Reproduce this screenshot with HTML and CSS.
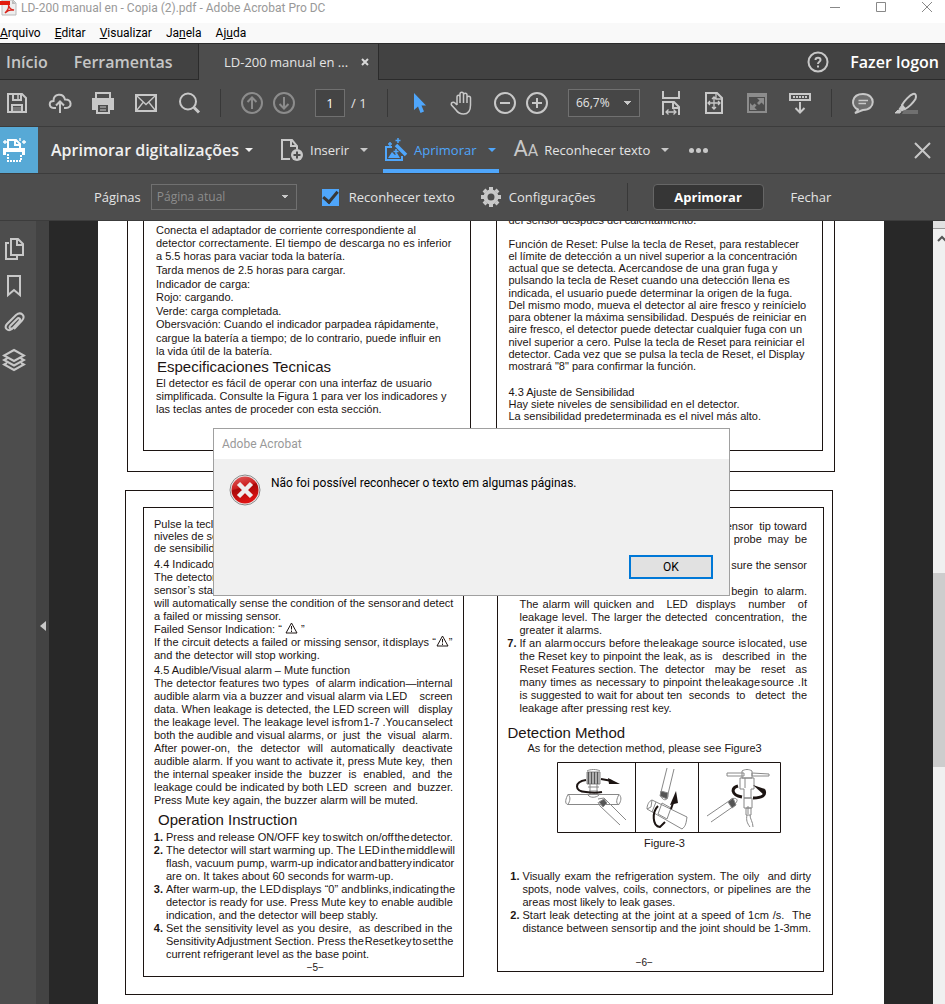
FILE: index.html
```html
<!DOCTYPE html>
<html lang="pt-BR">
<head>
<meta charset="utf-8">
<title>LD-200 manual en - Copia (2).pdf - Adobe Acrobat Pro DC</title>
<link rel="stylesheet" href="styles.css">
</head>
<body>
<header class="titlebar">
  <svg class="app-icon" width="17" height="16" viewBox="0 0 17 16"><path d="M2 0H13L16 3V15H2Z" fill="#eee" stroke="#bbb"/><path d="M12 0V4H16Z" fill="#bbb"/><path d="M0 1H10V5H0Z" fill="#e21b0c"/><path d="M5 13C8 10 9 7 8.500 5C9.500 9 12 10 14 10C10 9 7 11 5 13Z" fill="none" stroke="#d9251c" stroke-width="1.300"/></svg>
  <h1 class="window-title">LD-200 manual en - Copia (2).pdf - Adobe Acrobat Pro DC</h1>
  <div class="window-buttons">
    <button aria-label="Minimizar"><svg width="12" height="12"><path d="M1 7.500H11" stroke="#888"/></svg></button>
    <button aria-label="Maximizar"><svg width="12" height="12"><path d="M1.500 2.500H10.500V11.500H1.500Z" fill="none" stroke="#888"/></svg></button>
    <button aria-label="Fechar janela"><svg width="12" height="12"><path d="M1 2L11 12M11 2L1 12" stroke="#888"/></svg></button>
  </div>
</header>
<nav class="menubar">
  <a href="#"><u>A</u>rquivo</a><a href="#"><u>E</u>ditar</a><a href="#"><u>V</u>isualizar</a><a href="#">Ja<u>n</u>ela</a><a href="#">Aj<u>u</u>da</a>
</nav>
<div class="tabs">
  <div class="tabs-home"><a href="#">Início</a><a href="#">Ferramentas</a></div>
  <div class="tab-active"><span>LD-200 manual en ...</span><button aria-label="Fechar guia"><svg width="8" height="8"><path d="M1 1L7 7M7 1L1 7" stroke="#d8d8d8" stroke-width="2"/></svg></button></div>
  <div class="tabs-rest">
    <button aria-label="Ajuda"><svg width="22" height="22" viewBox="0 0 22 22" fill="none" stroke="#c8c8c8" stroke-width="2"><circle cx="11" cy="11" r="9.500"/><path d="M8.500 9C8.500 6 13.500 6 13.500 9C13.500 11 11 10.500 11 13M11 14.500V16.500"/></svg></button>
    <a href="#" class="login">Fazer logon</a>
  </div>
</div>
<div class="toolbar">
  <button aria-label="Salvar"><svg viewBox="0 0 24 24"><path d="M3 3H17L21 7V21H3Z"/><path d="M8 3V9H16V3M7 21V14H17V21" /><path d="M13 4V8" stroke-width="1.500"/><path d="M8 16H16V20H8Z" fill="#777" stroke="none"/></svg></button>
  <button aria-label="Nuvem"><svg viewBox="0 0 24 24"><path d="M8 17H5.500C0.500 16.500 0.500 10 5.500 10C5.500 2.500 15 1.500 17 8.500C24 8 24.500 17 18 17H16M12 22V11M8 14.500L12 10.500L16 14.500"/></svg></button>
  <button aria-label="Imprimir"><svg viewBox="0 0 24 24"><path d="M5 7V2H19V7" /><path d="M1 7H23V19H19V14H5V19H1Z" fill="#c8c8c8" stroke="none"/><path d="M6 13H18V22H6Z"/><path d="M9 16H15M9 19H15" stroke-width="1"/></svg></button>
  <button aria-label="E-mail"><svg viewBox="0 0 24 24"><path d="M2 4H22V20H2Z" /><path d="M3 5L12 13.500L21 5M3 19L9 11.500M21 19L15 11.500" stroke-width="1.300"/></svg></button>
  <button aria-label="Localizar"><svg viewBox="0 0 24 24"><circle cx="11" cy="10.500" r="8"/><path d="M17 16.500L22 21.500" stroke-width="3"/></svg></button>
  <span class="sep"></span>
  <div class="pair dim">
    <button aria-label="Página anterior"><svg viewBox="0 0 24 24"><circle cx="12" cy="12" r="10"/><path d="M12 18V7M7.500 11L12 6.500L16.500 11"/></svg></button>
    <button aria-label="Próxima página"><svg viewBox="0 0 24 24"><circle cx="12" cy="12" r="10"/><path d="M12 6V17M7.500 13L12 17.500L16.500 13"/></svg></button>
  </div>
  <div class="pager"><input type="text" value="1" aria-label="Número da página"><span>/ 1</span></div>
  <span class="sep"></span>
  <button aria-label="Selecionar"><svg viewBox="0 0 24 24"><path d="M7 2V19L11 15.500L13.500 22L17 20.500L14.500 14.500H19Z" fill="#4fa6fb" stroke="none"/></svg></button>
  <button aria-label="Mão"><svg viewBox="0 0 24 24" class="thin"><path d="M7 14V6C7 3.500 10 3.500 10 6V3C10 0.500 13.500 0.500 13.500 3V4C13.500 1.500 17 1.500 17 4V7C17 4.500 20.500 4.500 20.500 7V14C20.500 20 18 23 13.500 23C10 23 8 22 6 19L1.500 14C0.500 11.500 3.500 10.500 5 12L7 14M10 5V12M13.500 3V12M17 5V12"/></svg></button>
  <div class="pair">
    <button aria-label="Diminuir zoom"><svg viewBox="0 0 24 24"><circle cx="12" cy="12" r="10"/><path d="M7 12H17"/></svg></button>
    <button aria-label="Aumentar zoom"><svg viewBox="0 0 24 24"><circle cx="12" cy="12" r="10"/><path d="M7 12H17M12 7V17"/></svg></button>
  </div>
  <select class="zoom" aria-label="Zoom"><option>66,7%</option></select>
  <button aria-label="Ajustar largura"><svg viewBox="0 0 24 24"><path d="M4 0V7H20V0M4 24V11H15L20 16V24M14 11V17H20"/><path d="M7 21H17M9.500 18.500L7 21L9.500 23.500M14.500 18.500L17 21L14.500 23.500" stroke-width="1.300"/></svg></button>
  <button aria-label="Ajustar página"><svg viewBox="0 0 24 24"><path d="M4 2H15L20 7V22H4Z"/><path d="M14 2V8H20M12 6V18M6 12H18M10 8L12 6L14 8M10 16L12 18L14 16M8 10L6 12L8 14M16 10L18 12L16 14" stroke-width="1.300"/></svg></button>
  <button aria-label="Tela cheia"><svg viewBox="0 0 24 24"><path d="M3 3H21V21H3Z" stroke="#8c8c8c"/><path d="M3 4.500H21" stroke="#8c8c8c" stroke-width="3"/><path d="M12 7H19V14L16.500 11.500L14 14L12 12L14.500 9.500ZM12 19H5V12L7.500 14.500L9.500 12.500L11.500 14.500L9.500 16.500Z" fill="#8c8c8c" stroke="none"/></svg></button>
  <button aria-label="Ocultar barra"><svg viewBox="0 0 24 24"><path d="M2 3H22V9H2ZM12 11V21M7.500 17L12 21.500L16.500 17"/><path d="M5 6H19" stroke-dasharray="2 1"/></svg></button>
  <span class="sep"></span>
  <button aria-label="Comentar"><svg viewBox="0 0 24 24"><path d="M7 18.500C-1 15 0.500 3 12 3C25 3 25 19 12 19C9 20 6 22 4 22C6 21 6.500 20 7 18.500Z" fill="#6e6e6e"/><path d="M7.500 9.500H17M7.500 12.500H15" stroke-width="1.300"/></svg></button>
  <button aria-label="Realçar"><svg viewBox="0 0 24 24"><path d="M10 19H24V23H8Z" fill="#707070" stroke="none"/><path d="M19 3C16 4 10 10 8 14L11 18C14 17 19 12 21.500 8C22.500 5 22 2 19 3Z" /><path d="M8 14L5 18L8 20L11 18ZM4 19L1 22H6L7 20Z" fill="#c8c8c8" stroke-width="1"/></svg></button>
</div>
<div class="toolrow">
  <div class="tile"><svg width="24" height="26" viewBox="0 0 24 26" fill="none" stroke="#fff" stroke-width="2"><path d="M6 11V3H14L18 7V11M13 3V8H18"/><path d="M1 11H23V18H20V15H4V18H1Z" fill="#fff" stroke="none"/><path d="M6 17V24H19V17" stroke-dasharray="2 1"/><path d="M3 3V7M1 5H5M18 1V4M22 3V7M20 5H24" stroke-width="1.300"/></svg></div>
  <button class="tool-title">Aprimorar digitalizações<i class="caret"></i></button>
  <button class="tool insert"><svg width="24" height="24" viewBox="0 0 24 24" fill="none" stroke="#c8c8c8" stroke-width="2"><path d="M10 21H2V2H12L17 8V11M11 2V8H17"/><circle cx="17" cy="17" r="6" fill="#c8c8c8" stroke="none"/><path d="M13.500 17H20.500M17 13.500V20.500" stroke="#4d4d4d"/></svg><span>Inserir</span><i class="caret"></i></button>
  <button class="tool enhance"><svg width="24" height="24" viewBox="0 0 24 24" fill="none" stroke="#4fa6fb" stroke-width="2"><path d="M8 9H2V22H18V18"/><path d="M4 20L8 14L11 17L13 15L16 20Z" fill="#4fa6fb" stroke="none"/><path d="M12 7L22 17" stroke-width="3.500"/><path d="M6 4V8M4 6H8M14 0V5M11.500 2.500H16.500M12 11V16M9.500 13.500H14.500" stroke-width="1.500"/></svg><span>Aprimorar</span><i class="caret"></i></button>
  <button class="tool recognize"><span class="aa"><b>A</b>A</span><span>Reconhecer texto</span><i class="caret"></i></button>
  <button class="more" aria-label="Mais"><i></i><i></i><i></i></button>
  <button class="close" aria-label="Fechar ferramenta"><svg width="17" height="17"><path d="M1 1L16 16M16 1L1 16" stroke="#c8c8c8" stroke-width="2"/></svg></button>
</div>
<div class="subrow">
  <label for="pages">Páginas</label>
  <select id="pages" class="pages"><option>Página atual</option></select>
  <label class="check"><input type="checkbox" checked><span>Reconhecer texto</span></label>
  <button class="settings"><svg width="20" height="20" viewBox="-10 -10 20 20"><circle r="5.500" fill="none" stroke="#c8c8c8" stroke-width="4"/><path d="M0 -10V-6M0 10V6M-10 0H-6M10 0H6M-7 -7L-5 -5M7 7L5 5M-7 7L-5 5M7 -7L5 -5" stroke="#c8c8c8" stroke-width="4"/></svg>Configurações</button>
  <span class="sep"></span>
  <button class="primary">Aprimorar</button>
  <button class="plain">Fechar</button>
</div>
<main class="work">
  <nav class="rail">
    <button aria-label="Miniaturas"><svg viewBox="0 0 24 24"><path d="M9 2H16L21 7V18H9ZM15 2V8H21M7 6H4V22H15V19"/></svg></button>
    <button aria-label="Marcadores"><svg viewBox="0 0 24 24"><path d="M6 2H18V21L12 16L6 21Z"/></svg></button>
    <button aria-label="Anexos"><svg viewBox="0 0 24 24"><path d="M8 15L15 8C17 6 19 8 17.500 10L10 18C6 21 1.500 17 5 13L14 4C19 0 24 5 20 9.500L12 18M8 15C6.500 17 9 18.500 10.500 17"/></svg></button>
    <button aria-label="Camadas"><svg viewBox="0 0 24 24"><path d="M12 2L22 7.500L12 13L2 7.500ZM5 10.500L2 12L12 17.500L22 12L19 10.500M5 15L2 16.500L12 22L22 16.500L19 15"/></svg></button>
  </nav>
  <button class="collapse" aria-label="Expandir painel"><i></i></button>
  <div class="canvas">
    <article class="page">
      <section class="spread upper">
        <div class="sheet">
          <p>Conecta el adaptador de corriente correspondiente al<br>detector correctamente. El tiempo de descarga no es inferior<br>a 5.5 horas para vaciar toda la batería.</p>
          <p>Tarda menos de 2.5 horas para cargar.</p>
          <p>Indicador de carga:<br>Rojo: cargando.</p>
          <p>Verde: carga completada.<br>Obersvación: Cuando el indicador parpadea rápidamente,</p>
          <p>cargue la batería a tiempo; de lo contrario, puede influir en<br>la vida útil de la batería.</p>
          <h2>Especificaciones Tecnicas</h2>
          <p>El detector es fácil de operar con una interfaz de usuario<br>simplificada. Consulte la Figura 1 para ver los indicadores y<br>las teclas antes de proceder con esta sección.</p>
        </div>
        <div class="sheet dense">
          <p>del sensor después del calentamiento.</p>
          <p class="block">Función de Reset: Pulse la tecla de Reset, para restablecer<br>el límite de detección a un nivel superior a la concentración<br>actual que se detecta. Acercandose de una gran fuga y<br>pulsando la tecla de Reset cuando una detección llena es</p>
          <p>indicada, el usuario puede determinar la origen de la fuga.<br>Del mismo modo, mueva el detector al aire fresco y reinícielo<br>para obtener la máxima sensibilidad. Después de reiniciar en<br>aire fresco, el detector puede detectar cualquier fuga con un</p>
          <p>nivel superior a cero. Pulse la tecla de Reset para reiniciar el<br>detector. Cada vez que se pulsa la tecla de Reset, el Display<br>mostrará "8" para confirmar la función.</p>
          <p class="block">4.3 Ajuste de Sensibilidad<br>Hay siete niveles de sensibilidad en el detector.<br>La sensibilidad predeterminada es el nivel más alto.</p>
        </div>
      </section>
      <section class="spread lower">
        <div class="sheet five">
          <p class="tight">Pulse la tecla<br>niveles de sens<br>de sensibilidad</p>
          <p>4.4 Indicador<br>The detector<br>sensor’s stat</p>
          <p class="just"><span>will automatically sense the condition of the sensor&#8202;and detect</span></p>
          <p>a failed or missing sensor.</p>
          <p>Failed Sensor Indication: “ <svg class="warn" width="13" height="12" viewBox="0 0 13 12"><path d="M6.500 1L12 11H1ZM6.500 4V7.500M6.500 8.500V10"/></svg> ”</p>
          <p class="just"><span>If the circuit detects a failed or missing sensor, it&#8202;displays “<svg class="warn" width="13" height="12" viewBox="0 0 13 12"><path d="M6.500 1L12 11H1ZM6.500 4V7.500M6.500 8.500V10"/></svg>”</span></p>
          <p>and the detector will stop working.</p>
          <p class="topic">4.5 Audible/Visual alarm – Mute function</p>
          <p class="just"><span>The detector features two types &nbsp;of alarm indication—internal</span><span>audible alarm via a buzzer and visual alarm via LED &nbsp; &nbsp;screen</span><span>data. When leakage is detected, the LED screen will &nbsp;&nbsp;display</span><span>the leakage level. The leakage level is&#8202;from&#8202;1-7 .You&#8202;can&#8202;select</span><span>both the audible and visual alarms, or &nbsp;just &nbsp;the &nbsp;visual &nbsp;alarm.</span><span>After power-on, &nbsp;the &nbsp;detector &nbsp;will &nbsp;automatically &nbsp;deactivate</span><span>audible alarm. If you want to activate it, press Mute key, &nbsp;then</span><span>the internal speaker inside the &nbsp;buzzer &nbsp;is &nbsp;enabled, &nbsp;and &nbsp;the</span><span>leakage could be indicated by both LED &nbsp;screen &nbsp;and &nbsp;buzzer.</span></p>
          <p>Press Mute key again, the buzzer alarm will be muted.</p>
          <h2>Operation Instruction</h2>
          <ol class="just">
            <li><span>Press and release ON/OFF key to&#8202;switch on/off&#8202;the&#8202;detector.</span></li>
            <li><span>The detector will start warming up. The LED&#8202;in&#8202;the&#8202;middle&#8202;will</span><span>flash, vacuum pump, warm-up indicator&#8202;and&#8202;battery&#8202;indicator</span><span class="last">are on. It takes about 60 seconds for warm-up.</span></li>
            <li><span>After warm-up, the LED&#8202;displays “0” and&#8202;blinks,&#8202;indicating&#8202;the</span><span>detector is ready for use. Press Mute key to enable audible</span><span class="last">indication, and the detector will beep stably.</span></li>
            <li><span>Set the sensitivity level as you desire, &nbsp;as described in the</span><span>Sensitivity&#8202;Adjustment Section. Press the&#8202;Reset&#8202;key&#8202;to&#8202;set&#8202;the</span><span class="last">current refrigerant level as the base point.</span></li>
          </ol>
          <div class="folio">−5−</div>
        </div>
        <div class="sheet six">
          <p class="tail">sensor &nbsp;tip toward<br>probe &nbsp;may &nbsp;be<br><br>sure the sensor<br><br>begin &nbsp;to alarm.</p>
          <p class="just carry"><span>The alarm will quicken and &nbsp; LED &nbsp;displays &nbsp; number &nbsp; of</span><span>leakage level. The larger the detected &nbsp;concentration, &nbsp;the</span><span class="last">greater it alarms.</span></p>
          <ol class="just" start="7">
            <li><span>If an alarm&#8202;occurs before the&#8202;leakage source is&#8202;located, use</span><span>the Reset key to pinpoint the leak, as is &nbsp; described &nbsp;in &nbsp;the</span><span>Reset Features section. The &nbsp;detector &nbsp; may be &nbsp; reset &nbsp; as</span><span>many times as necessary to pinpoint the&#8202;leakage&#8202;source .It</span><span>is suggested to wait for about ten &nbsp;seconds &nbsp;to &nbsp; detect &nbsp;the</span><span class="last">leakage after pressing rest key.</span></li>
          </ol>
          <h2>Detection Method</h2>
          <p class="lead">As for the detection method, please see Figure3</p>
          <figure>
            <svg width="224" height="71" viewBox="0 0 224 71" fill="none" stroke="#888" stroke-width="1">
              <path d="M.5 .5H223.500V70.500H.5ZM78.500 0V71M141.500 0V71" stroke="#1c1412"/>
              <path d="M11 32.500H62M11 42.500H62M11 32.500C14 35 13 39 11 42.500C7 42 9 36 11 32.500M62 32.500C65 35 64 39 62 42.500C58 42 60 36 62 32.500"/>
              <path d="M30 10H43V22H30Z" fill="#ccc"/><path d="M30 9C33 7 40 7 43 9M31 25H42M32 29H41M33 22V33M40 22V33M31 33C33 36 39 36 42 33"/><path d="M31.500 10V22M34.500 10V22M37.500 10V22M40.500 10V22" stroke="#555" stroke-width="1.500"/>
              <path d="M29 18C17 20 17 29 29 30C35 31 40 31 45 30M44 17L55 19" stroke="#1c1412" stroke-width="2"/><path d="M51 16L63 22L52 22Z" fill="#1c1412" stroke="none"/>
              <path d="M41 37L47 36L69 58M41 40L43 44L63 63" /><path d="M42 40L47 37L50 41L46 45Z" fill="#555"/>
              <path d="M110 6L104 30M117 7L111 32M104 30C103 40 112 40 111 32" /><path d="M104 29L111 31L110 37L103 34Z" fill="#555"/>
              <path d="M95 38L130 55M90 47L125 67M95 38C92 39 90 43 90 47L94 45ZM130 55C129 61 129 64 125 67M105 41L114 46L110 57L101 52ZM99 40L95 50"/>
              <path d="M101 44C95 50 95 64 103 65L108 60" stroke="#1c1412" stroke-width="2"/><path d="M114 47L117 38" stroke="#1c1412" stroke-width="2"/><path d="M119 29L113 43L121 41Z" fill="#1c1412" stroke="none"/>
              <path d="M170 11H187V14H170ZM195 11L212 12V14L195 14ZM185 9C188 7 192 7 195 9V16H185ZM183 16H197V27H194V36H187V27H183ZM187 36H195V46H187ZM189 46H194V53H189ZM190 53C189 58 190 61 193 65M193 53C193 57 196 60 196 65M191 44V52M188 16V26"/>
              <path d="M181 24C174 26 174 33 185 35M196 36C206 36 209 33 207 28" stroke="#1c1412" stroke-width="3"/><path d="M196 23L208 27L207 33Z" fill="#1c1412" stroke="none"/>
              <path d="M150 54L172 39M154 60L177 44M172 39C175 35 181 36 180 39L177 44"/><path d="M171 40L176 36L179 43L175 46Z" fill="#555"/>
            </svg>
            <figcaption>Figure-3</figcaption>
          </figure>
          <ol class="just method">
            <li><span>Visually exam the refrigeration system. The oily &nbsp;and dirty</span><span>spots, node valves, coils, connectors, or pipelines are the</span><span class="last">areas most likely to leak gases.</span></li>
            <li><span>Start leak detecting at the joint at a speed of 1cm /s. &nbsp;The</span><span>distance between sensor&#8202;tip and the joint should be 1-3mm.</span></li>
          </ol>
          <div class="folio">−6−</div>
        </div>
      </section>
    </article>
  </div>
  <div class="scrollbar"><div class="split"></div><svg width="12" height="18"><path d="M5 12L9 8L13 12" fill="none" stroke="#555" stroke-width="2"/></svg><div class="thumb"></div></div>
  <section class="dialog" role="dialog" aria-labelledby="dlg-title">
    <h2 id="dlg-title">Adobe Acrobat</h2>
    <div class="dialog-body">
      <svg width="32" height="32" viewBox="0 0 32 32"><defs><linearGradient id="red" x1="0" y1="0" x2="0.300" y2="1"><stop offset="0" stop-color="#e06060"/><stop offset=".45" stop-color="#cc2020"/><stop offset=".5" stop-color="#a90808"/><stop offset="1" stop-color="#dc1414"/></linearGradient></defs><circle cx="16" cy="16" r="15" fill="#eee" stroke="#888"/><circle cx="16" cy="16" r="13.500" fill="url(#red)"/><path d="M9.500 9.500L22.500 22.500M22.500 9.500L9.500 22.500" stroke="#eee" stroke-width="4.500"/></svg>
      <p>Não foi possível reconhecer o texto em algumas páginas.</p>
    </div>
    <div class="dialog-actions"><button>OK</button></div>
  </section>
</main>
</body>
</html>
```
FILE: styles.css
```css
* { box-sizing: border-box; }
body {
  margin: 0;
  height: 100vh;
  display: flex;
  flex-direction: column;
  overflow: hidden;
  background: #4d4d4d;
  color: #e4e4e4;
  font: 13px/18px "Open Sans", "Noto Sans", sans-serif;
}
h1, h2, p, ol, figure { margin: 0; padding: 0; font-weight: 400; }
button, input, select { font: inherit; color: inherit; margin: 0; }
button { background: none; border: 0; padding: 0; display: flex; align-items: center; }
svg { display: block; flex: none; }
a { color: inherit; text-decoration: none; }
select { appearance: none; border-radius: 0; }

.titlebar, .menubar, .dialog { font-family: Roboto, "Open Sans", sans-serif; font-size: 12px; }
.titlebar { display: flex; align-items: flex-start; height: 23px; background: #fff; color: #999; flex: none; }
.window-title { font-size: 12px; line-height: 16px; margin-left: 4px; flex: 1; white-space: nowrap; }
.window-buttons { display: flex; gap: 34px; padding-right: 12px; }

.menubar { display: flex; gap: 14px; height: 20px; background: #f9f9f9; color: #000; line-height: 20px; flex: none; }

.tabs { display: flex; height: 37px; border-top: 1px solid #2b2b2b; flex: none; font-size: 16px; background: #424242; }
.tabs-home { width: 199px; display: flex; gap: 26px; padding-left: 6px; align-items: center; border: solid #2b2b2b; border-width: 0 1px 1px 0; color: #c6c6c6; font-weight: 600; }
.tab-active { width: 179px; display: flex; align-items: center; justify-content: space-between; padding: 0 9px 0 25px; background: #4d4d4d; font-size: 13px; white-space: nowrap; }
.tabs-rest { flex: 1; display: flex; align-items: center; justify-content: flex-end; gap: 21px; padding-right: 6px; border: solid #2b2b2b; border-width: 0 0 1px 1px; }
.login { color: #fff; font-weight: 600; }

.toolbar { display: flex; align-items: center; gap: 19px; height: 46px; padding-left: 5px; flex: none; }
.toolbar svg, .rail svg { width: 24px; height: 24px; fill: none; stroke: #c8c8c8; stroke-width: 2; }
.toolbar svg.thin { stroke-width: 1.5; }
.toolbar .dim svg { stroke: #8c8c8c; }
.pair { display: flex; gap: 8px; }
.sep { width: 1px; height: 28px; background: #383838; flex: none; }
.pager { display: flex; align-items: center; gap: 6px; }
.pager span { width: 17px; white-space: nowrap; }
.pager input { width: 30px; height: 28px; background: #444; border: 1px solid #707070; text-align: center; padding: 0; color: #fff; }
.zoom, .pages {
  border: 1px solid #707070;
  padding: 0 7px;
  font-size: 12px;
  background:
    linear-gradient(to bottom right, #c8c8c8 50%, transparent 50%) right 7px center / 4px 4px no-repeat,
    linear-gradient(to bottom left, #c8c8c8 50%, transparent 50%) right 11px center / 4px 4px no-repeat,
    #464646;
}
.zoom { width: 72px; height: 28px; }

.toolrow { display: flex; align-items: stretch; height: 48px; border: solid #3c3c3c; border-width: 1px 0; flex: none; white-space: nowrap; }
.tile { width: 38px; background: #57a9d6; display: flex; align-items: center; padding-left: 2px; }
.caret { border: solid transparent; border-width: 4px 4px 0; border-top-color: currentColor; width: 0; }
.tool-title { width: 230px; padding-left: 13px; font-size: 16px; font-weight: 600; color: #f0f0f0; gap: 6px; }
.tool { gap: 6px; padding: 0 3px; margin-right: 12px; }
.tool .caret { margin-left: 5px; color: #c8c8c8; }
.insert { padding-left: 12px; }
.enhance { color: #4fa6fb; border-bottom: 4px solid #4fa6fb; padding: 4px 3px 0 1px; }
.enhance .caret { color: #4fa6fb; }
.aa { font: 16px/20px Roboto, sans-serif; color: #c8c8c8; }
.aa b { font-size: 22px; font-weight: 400; }
.more { gap: 2px; margin-left: 5px; }
.more i { width: 5px; height: 5px; border-radius: 3px; background: #c8c8c8; }
.close { margin-left: auto; padding-right: 14px; }

.subrow { display: flex; align-items: center; height: 47px; padding-left: 94px; border-bottom: 1px solid #3c3c3c; flex: none; white-space: nowrap; }
.pages { width: 146px; height: 26px; margin: 0 25px 0 10px; padding: 0 5px; color: #8c8c8c; background-color: #4d4d4d; }
.check { display: flex; align-items: center; gap: 10px; }
.check input { appearance: none; width: 17px; height: 17px; background: #4fa6fb; display: grid; place-items: center; }
.check input::after { content: ""; width: 12px; height: 6px; border: solid #383838; border-width: 0 0 3px 3px; rotate: -50deg; translate: 0 -2px; }
.settings { gap: 8px; margin: 0 31px 0 26px; }
.primary { width: 111px; height: 26px; margin: 0 27px 0 25px; justify-content: center; background: #363636; border: 1px solid #666; border-radius: 4px; color: #fff; font-weight: 700; }

.work { flex: 1; min-height: 0; display: flex; position: relative; }
.rail { width: 36px; display: flex; flex-direction: column; gap: 13px; padding: 16px 0 0 2px; }
.collapse { width: 13px; background: #434343; justify-content: center; padding-top: 26px; }
.collapse i { border: solid transparent; border-width: 5px 6px 5px 0; border-right-color: #c8c8c8; }
.canvas { flex: 1; min-width: 0; background: #282828; padding: 0 49px; overflow: hidden; }
.page { background: #fff; min-height: 100%; padding: 0 51px 10px 27px; color: #1c1412; font: 11px/13px "Liberation Sans", Arial, sans-serif; white-space: nowrap; overflow: hidden; }
.spread { display: grid; column-gap: 25px; border: 1px solid #1c1412; }
.sheet { min-width: 0; border: 1px solid #1c1412; padding: 0 12px; }
.page h2 { font-size: 15px; line-height: 18px; }

.upper { grid-template-columns: 1fr 1fr; margin: 0 -2px 18px 2px; padding: 0 11px 20px 15px; border-top: 0; }
.upper .sheet { border-top: 0; padding: 3px 12px 28px; }
.upper p + p { margin-top: 1px; }
.upper h2 { margin: 0 0 1px 1px; }
.upper .dense { line-height: 12px; margin-top: -10px; }
.upper p.block { margin-top: 12px; }
.upper p.block:last-child { margin-top: 14px; }

.lower { grid-template-columns: minmax(0, 321fr) minmax(0, 328fr); column-gap: 33px; padding: 16px 8px 17px 17px; align-items: start; }
.five { padding: 10px 10px 2px; }
.six { padding: 12px 16px 2px 10px; }
.tight { line-height: 12px; margin-bottom: 4px; }
.topic { margin-top: 2px; }
.tail { text-align: right; }
.warn { display: inline-block; vertical-align: -1px; margin-top: -3px; fill: none; stroke: #1c1412; height: 12px; }
.just span { display: block; text-align-last: justify; }
.just .last { text-align-last: left; }
.carry { padding-left: 12px; }
.five h2 { margin: 4px 0 2px 4px; }
ol { padding-left: 12px; }
ol li::marker { content: counter(list-item) ". "; font-weight: 700; }
.folio { text-align: center; font-size: 10px; }
.five .folio { margin-left: 24px; }
.six h2 { margin-top: 9px; }
.lead { padding-left: 20px; }
figure { margin-top: 7px; padding-left: 49px; width: 273px; }
figcaption { text-align: center; margin: 4px 0 20px -8px; }
.method { padding-left: 15px; margin-right: -4px; }
.six .folio { margin: 21px 26px 0 0; }

.scrollbar { width: 12px; background: #f0f0f0; overflow: hidden; }
.split { height: 8px; background: #e1e1e1; border-bottom: 1px solid #999; }
.thumb { height: 194px; margin-top: 326px; background: #cdcdcd; }

.dialog { position: absolute; left: 213px; top: 207px; width: 517px; border: 1px solid #a0a0a0; background: #f0f0f0; color: #000; }
.dialog h2 { height: 30px; background: #fff; color: #999; font-size: 12px; line-height: 30px; padding-left: 8px; }
.dialog-body { display: flex; gap: 10px; padding: 15px 15px 0; }
.dialog-actions { display: flex; justify-content: flex-end; padding: 49px 16px 16px; }
.dialog-actions button { width: 84px; height: 24px; justify-content: center; background: #e1e1e1; border: 2px solid #0078d7; }
```
